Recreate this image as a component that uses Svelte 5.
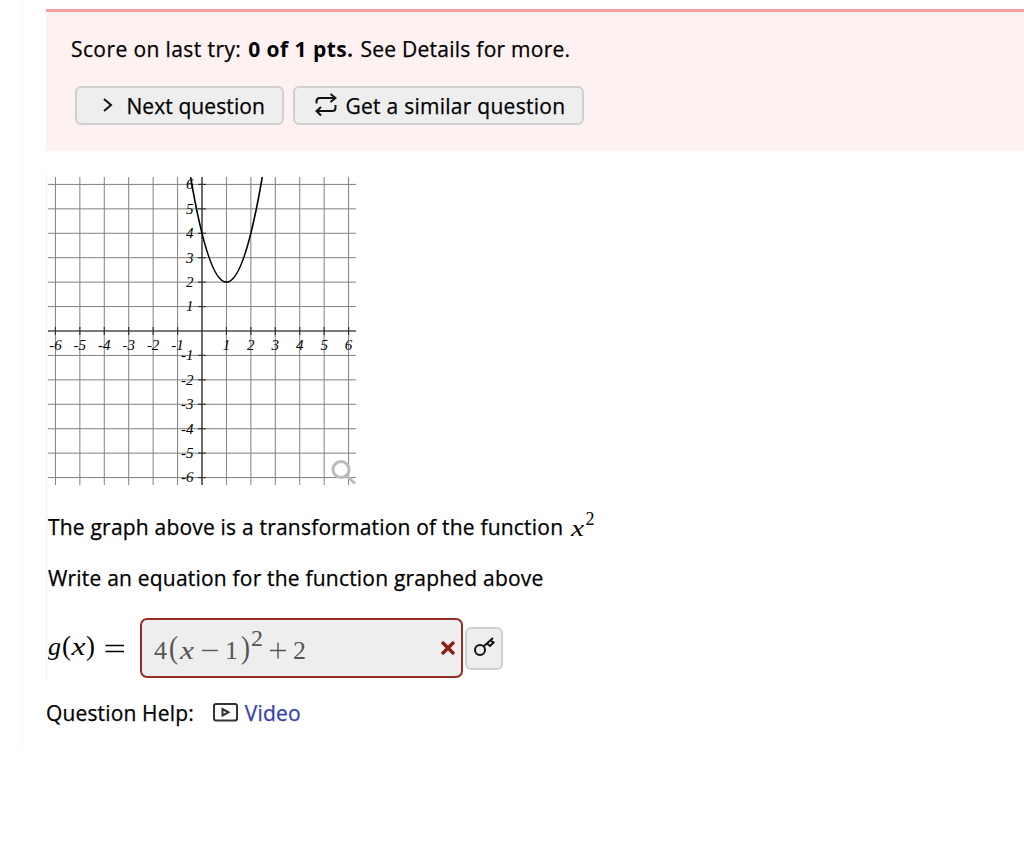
<script>
  const step = 24.43
  const center = 154
  const ticks = [-6, -5, -4, -3, -2, -1, 1, 2, 3, 4, 5, 6]
  const grid = [-6, -5, -4, -3, -2, -1, 0, 1, 2, 3, 4, 5, 6]

  const px = (x) => center + x * step
  const py = (y) => center - y * step

  // 2(x - 1)^2 + 2, cut off at the top edge of the graph
  const top = center / step
  const reach = Math.sqrt((top - 2) / 2)
  const curve = `M${px(1 - reach)} 0Q${px(1)} ${py(4 - top)} ${px(1 + reach)} 0`
</script>

<main>
  <section class="score">
    <p>
      <span class="try">Score on last try:</span>
      <b>0 of 1 pts.</b>
      <span class="more">See Details for more.</span>
    </p>
    <div class="buttons">
      <button class="next">
        <svg width="12" height="16" viewBox="0 0 12 16">
          <path d="M2 1L9 7L2 13" />
        </svg>
        <span>Next question</span>
      </button>
      <button class="similar">
        <svg width="22" height="26" viewBox="0 0 22 26">
          <path d="M1.500 10.500V8.500Q1.500 5 4.500 5H20M15.500 1L20.500 5L15.500 9M20.500 12V14.500Q20.500 18 17.500 18H2M6 14L1.500 18L6 22.500" />
        </svg>
        <span>Get a similar question</span>
      </button>
    </div>
  </section>

  <section class="question">
    <svg class="graph" width="310" height="310" viewBox="0 0 310 310">
      {#each grid as n}
        <line class="grid" x1={px(n)} x2={px(n)} y1="0" y2="308" />
        <line class="grid" y1={py(n)} y2={py(n)} x1="0" x2="308" />
      {/each}
      <line class="axis" x1="154" x2="154" y1="0" y2="308" />
      <line class="axis" y1="154" y2="154" x1="0" x2="308" />
      {#each ticks as n}
        <line class="axis" x1={px(n)} x2={px(n)} y1="150" y2="158" />
        <line class="axis" y1={py(n)} y2={py(n)} x1="150" x2="158" />
        <text x={px(n)} y="172.500" text-anchor="middle">{n}</text>
        <text x="145.500" y={py(n) + 4.8} text-anchor="end">{n}</text>
      {/each}
      <path class="curve" d={curve} />
      <g class="magnifier">
        <circle cx="293" cy="292.500" r="8" />
        <path d="M299 299L307 306.500" />
      </g>
    </svg>

    <p class="above">
      <span>The graph above is a transformation of the function</span>
      <svg class="math" width="28" height="34" viewBox="0 -4 28 34">
        <text class="i" x="2" y="24" font-size="24" textLength="13" lengthAdjust="spacingAndGlyphs">x</text>
        <text x="16.500" y="13" font-size="18">2</text>
      </svg>
    </p>
    <p class="write"><span>Write an equation for the function graphed above</span></p>

    <div class="answer">
      <svg class="math" width="92" height="42" viewBox="0 0 92 42">
        <text class="i" x="0" y="28" font-size="26" textLength="13" lengthAdjust="spacingAndGlyphs">g</text>
        <text x="14" y="28" font-size="27" textLength="9" lengthAdjust="spacingAndGlyphs">(</text>
        <text class="i" x="23.500" y="28" font-size="26" textLength="14" lengthAdjust="spacingAndGlyphs">x</text>
        <text x="38" y="28" font-size="27" textLength="9" lengthAdjust="spacingAndGlyphs">)</text>
        <path d="M57.500 18.500H76M57.500 24.500H76" />
      </svg>
      <div class="field">
        <svg class="math" width="160" height="50" viewBox="0 0 160 50">
          <text x="0" y="35.500" font-size="26">4</text>
          <text x="15" y="35" font-size="31" textLength="9" lengthAdjust="spacingAndGlyphs">(</text>
          <text class="i" x="26" y="35.500" font-size="26" textLength="14" lengthAdjust="spacingAndGlyphs">x</text>
          <path d="M48 27.500H64" />
          <text x="71" y="35.500" font-size="26">1</text>
          <text x="87" y="35" font-size="31" textLength="9" lengthAdjust="spacingAndGlyphs">)</text>
          <text x="97" y="22.500" font-size="24">2</text>
          <path d="M116 27.500H132M124 19.500V35.500" />
          <text x="139" y="35.500" font-size="26">2</text>
        </svg>
        <svg class="wrong" width="16" height="16" viewBox="0 0 16 16">
          <path d="M2 2L14 14M14 2L2 14" />
        </svg>
      </div>
      <button class="key" aria-label="Show answer">
        <svg width="22" height="22" viewBox="0 0 22 22">
          <circle cx="7" cy="13" r="5" />
          <path d="M10.500 9.500L20 1M14 6.500L17 9L20.500 5.500L17.500 3.500" />
        </svg>
      </button>
    </div>
  </section>

  <footer>
    <span class="help">Question Help:</span>
    <svg width="26" height="20" viewBox="0 0 26 20">
      <rect x="1" y="1" width="23" height="16.500" rx="2" />
      <path d="M9.500 6V12.500L15.500 9.250Z" />
    </svg>
    <a href="#video">Video</a>
  </footer>
</main>

<style>
  :global(body) {
    background: #fff;
    overflow: hidden;
  }

  main {
    box-sizing: border-box;
    height: 748px;
    margin-left: 22px;
    padding: 9px 0 0 23px;
    border-left: 1px solid #f7f7f7;
    color: #000;
    font-family: 'Open Sans', 'Noto Sans', sans-serif;
    font-size: 21px;
    line-height: 30px;
    letter-spacing: 0.2px;
    white-space: nowrap;
    -webkit-text-stroke: 0.25px;
  }

  p {
    margin: 0;
  }

  svg {
    flex: none;
    fill: none;
    stroke: #111;
    stroke-width: 2;
  }

  svg text {
    fill: currentColor;
    stroke: none;
    font-family: 'Liberation Serif', serif;
    letter-spacing: 0;
  }

  .score {
    box-sizing: border-box;
    height: 142px;
    padding: 22px 25px 0;
    background: #fdf2f1;
    border-top: 3px solid #f7a1a1;
  }

  .score p {
    display: flex;
    gap: 7px;
  }

  .try {
    letter-spacing: 0.4px;
  }

  .score b {
    letter-spacing: 0.45px;
    -webkit-text-stroke: 0;
  }

  .more {
    letter-spacing: 0.25px;
  }

  .buttons {
    display: flex;
    gap: 9px;
    margin: 22px 0 0 4.4px;
  }

  button {
    box-sizing: border-box;
    display: flex;
    align-items: center;
    padding: 0;
    background: #eee;
    border: 2px solid #d0d0d0;
    border-radius: 6px;
    color: #000;
    font: inherit;
    letter-spacing: 0.1px;
  }

  .next {
    width: 209px;
    height: 39px;
    padding-left: 25px;
    gap: 12px;
  }

  .similar {
    width: 291px;
    height: 39px;
    padding-left: 20px;
    gap: 8px;
    letter-spacing: 0.27px;
  }

  .question {
    box-sizing: border-box;
    height: 505px;
    margin-top: 24px;
    padding: 2px 0 0 1px;
    border-left: 1px solid #f0f0f0;
  }

  .graph {
    display: block;
  }

  .graph text {
    fill: #000;
    font-size: 15px;
    font-style: italic;
  }

  .grid {
    stroke: #808080;
    stroke-width: 1;
  }

  .axis {
    stroke: #333;
    stroke-width: 1.2;
  }

  .curve {
    stroke: #000;
    stroke-width: 1.6;
  }

  .magnifier {
    stroke: #bbb;
    stroke-width: 3;
  }

  .above {
    display: flex;
    height: 30px;
    margin-top: 25px;
    gap: 6px;
  }

  .above svg {
    margin-top: -4px;
  }

  .write {
    margin-top: 21px;
  }

  .math .i {
    font-style: italic;
    -webkit-text-stroke: 0;
  }

  .math path {
    stroke: currentColor;
    stroke-width: 1.4;
  }

  .answer {
    display: flex;
    align-items: center;
    height: 60px;
    margin-top: 25px;
  }

  .field {
    box-sizing: border-box;
    display: flex;
    align-items: center;
    justify-content: space-between;
    width: 323px;
    height: 60px;
    padding: 0 5px 0 12px;
    background: #eee;
    border: 2px solid #9c2b25;
    border-radius: 7px;
    color: #555;
  }

  .wrong {
    stroke: #911b13;
    stroke-width: 3.2;
  }

  .key {
    justify-content: center;
    width: 38px;
    height: 43px;
    margin-left: 2px;
  }

  footer {
    display: flex;
    align-items: center;
    height: 30px;
    margin-top: 18px;
  }

  footer svg {
    margin: 0 6px 0 19px;
    stroke: #333;
  }

  .help {
    letter-spacing: 0.15px;
  }

  a {
    color: #3740b0;
    text-decoration: none;
  }
</style>
